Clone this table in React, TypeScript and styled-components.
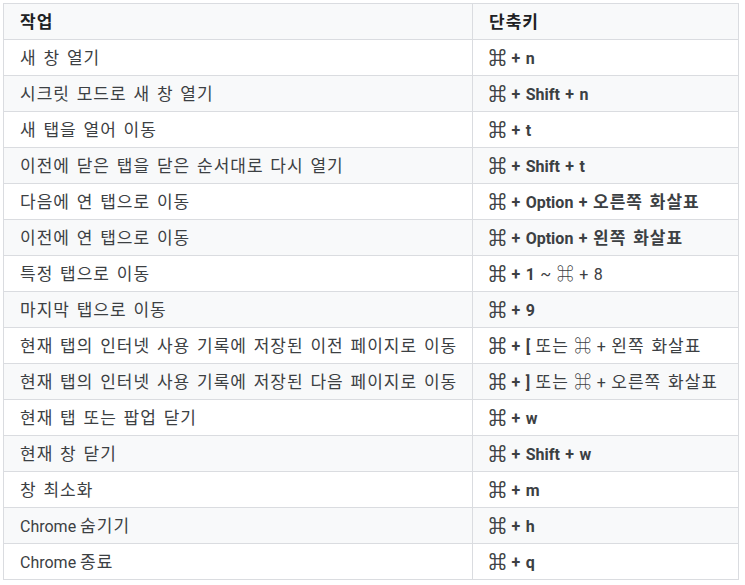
import React from 'react';
import styled, { createGlobalStyle } from 'styled-components';

interface Segment {
  text: string;
  bold?: boolean;
}

interface Shortcut {
  action: string;
  keys: Segment[];
}

const GlobalStyle = createGlobalStyle`
  html, body {
    margin: 0;
    padding: 0;
    background: #ffffff;
  }

  body {
    font-family: Roboto, "Noto Sans CJK KR", sans-serif;
    color: #3c4043;
  }
`;

const Page = styled.div`
  padding: 3px;
`;

const Table = styled.table`
  width: 735px;
  border-collapse: collapse;
  table-layout: fixed;
  font-size: 16px;
  line-height: 24px;
`;

const HeadCell = styled.th<{ width: number }>`
  width: ${(props) => props.width}px;
  height: 36px;
  padding: 0 16px;
  box-sizing: border-box;
  text-align: left;
  vertical-align: middle;
  font-weight: 700;
  color: #202124;
  background-color: #f8f9fa;
  border: 1px solid #dadce0;
`;

const Row = styled.tr`
  &:nth-child(even) {
    background-color: #f8f9fa;
  }
`;

const Cell = styled.td<{ $keys?: boolean }>`
  height: 36px;
  padding: 0 16px;
  box-sizing: border-box;
  vertical-align: middle;
  border: 1px solid #dadce0;
  white-space: nowrap;
  word-spacing: ${(props) => (props.$keys ? '1.5px' : '0')};
`;

const Strong = styled.b`
  font-weight: 700;
`;

const Hangul = styled.span`
  font-family: "Noto Sans CJK KR", sans-serif;
  font-size: 17px;
  letter-spacing: 1px;
  word-spacing: 2px;
`;

const Cmd = styled.span<{ $bold?: boolean }>`
  font-family: "Noto Sans CJK KR", sans-serif;
  font-size: 17px;
  -webkit-text-stroke: ${(props) => (props.$bold ? '0.6px currentColor' : '0')};
`;

const TOKEN = /(⌘|[가-힣]+(?:\s+[가-힣]+)*)/g;

const Rich = ({ text, bold }: { text: string; bold?: boolean }) => (
  <>
    {text.split(TOKEN).map((part, i) => {
      if (!part) return null;
      if (part === '⌘')
        return (
          <Cmd key={i} $bold={bold}>
            ⌘
          </Cmd>
        );
      if (/[가-힣]/.test(part)) return <Hangul key={i}>{part}</Hangul>;
      return <React.Fragment key={i}>{part}</React.Fragment>;
    })}
  </>
);

const Keys = ({ segments }: { segments: Segment[] }) => (
  <>
    {segments.map((seg, i) =>
      seg.bold ? (
        <Strong key={i}>
          <Rich text={seg.text} bold />
        </Strong>
      ) : (
        <Rich key={i} text={seg.text} />
      )
    )}
  </>
);

const shortcuts: Shortcut[] = [
  { action: '새 창 열기', keys: [{ text: '⌘ + n', bold: true }] },
  { action: '시크릿 모드로 새 창 열기', keys: [{ text: '⌘ + Shift + n', bold: true }] },
  { action: '새 탭을 열어 이동', keys: [{ text: '⌘ + t', bold: true }] },
  {
    action: '이전에 닫은 탭을 닫은 순서대로 다시 열기',
    keys: [{ text: '⌘ + Shift + t', bold: true }],
  },
  {
    action: '다음에 연 탭으로 이동',
    keys: [{ text: '⌘ + Option + 오른쪽 화살표', bold: true }],
  },
  {
    action: '이전에 연 탭으로 이동',
    keys: [{ text: '⌘ + Option + 왼쪽 화살표', bold: true }],
  },
  {
    action: '특정 탭으로 이동',
    keys: [{ text: '⌘ + 1', bold: true }, { text: ' ~ ⌘ + 8' }],
  },
  { action: '마지막 탭으로 이동', keys: [{ text: '⌘ + 9', bold: true }] },
  {
    action: '현재 탭의 인터넷 사용 기록에 저장된 이전 페이지로 이동',
    keys: [{ text: '⌘ + [', bold: true }, { text: ' 또는 ⌘ + 왼쪽 화살표' }],
  },
  {
    action: '현재 탭의 인터넷 사용 기록에 저장된 다음 페이지로 이동',
    keys: [{ text: '⌘ + ]', bold: true }, { text: ' 또는 ⌘ + 오른쪽 화살표' }],
  },
  { action: '현재 탭 또는 팝업 닫기', keys: [{ text: '⌘ + w', bold: true }] },
  { action: '현재 창 닫기', keys: [{ text: '⌘ + Shift + w', bold: true }] },
  { action: '창 최소화', keys: [{ text: '⌘ + m', bold: true }] },
  { action: 'Chrome 숨기기', keys: [{ text: '⌘ + h', bold: true }] },
  { action: 'Chrome 종료', keys: [{ text: '⌘ + q', bold: true }] },
];

const App = () => {
  return (
    <Page>
      <GlobalStyle />
      <Table>
        <thead>
          <tr>
            <HeadCell width={469}>
              <Rich text="작업" />
            </HeadCell>
            <HeadCell width={266}>
              <Rich text="단축키" />
            </HeadCell>
          </tr>
        </thead>
        <tbody>
          {shortcuts.map((item) => (
            <Row key={item.action}>
              <Cell>
                <Rich text={item.action} />
              </Cell>
              <Cell $keys>
                <Keys segments={item.keys} />
              </Cell>
            </Row>
          ))}
        </tbody>
      </Table>
    </Page>
  );
};

export default App;
